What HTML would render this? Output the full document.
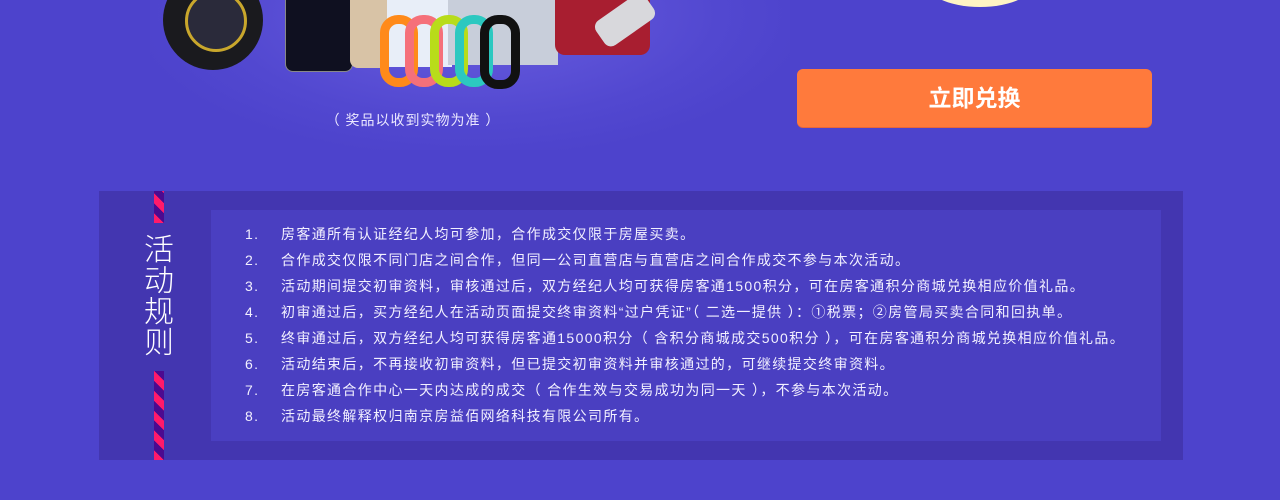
<!DOCTYPE html>
<html><head><meta charset="utf-8"><style>
body{margin:0;width:1280px;height:500px;background:#4d43cc;position:relative;overflow:hidden;font-family:"Liberation Sans","Noto Sans CJK SC",sans-serif}
.a{position:absolute}
.rules div{position:absolute;left:245px;color:#f2f0ff;font-size:14px;line-height:18px;white-space:nowrap;letter-spacing:1.35px}
.rules div span{position:absolute;left:36px;top:0}
</style></head><body>
<div class="a" style="left:150px;top:-20px;width:640px;height:170px;background:radial-gradient(ellipse at 50% 20%,#6a5ee0 0%,#5248d0 55%,#4d43cc 75%);"></div>
<div class="a" style="left:163px;top:-30px;width:100px;height:100px;border-radius:50%;background:#1a1a1e;"></div>
<div class="a" style="left:185px;top:-10px;width:56px;height:56px;border-radius:50%;border:3px solid #c9a72c;background:#2a2a3a;"></div>
<div class="a" style="left:285px;top:-5px;width:66px;height:75px;background:#0f1020;border-radius:0 0 8px 8px;border:1px solid #888;"></div>
<div class="a" style="left:350px;top:-5px;width:40px;height:73px;background:#d8c3a6;border-radius:0 0 8px 8px;"></div>
<div class="a" style="left:387px;top:-5px;width:65px;height:72px;background:#e8eef8;"></div>
<div class="a" style="left:448px;top:-5px;width:110px;height:70px;background:#c8ceda;"></div>
<div class="a" style="left:380px;top:15px;width:38px;height:72px;border:9px solid #ff8a1a;border-radius:18px;box-sizing:border-box"></div>
<div class="a" style="left:405px;top:15px;width:38px;height:72px;border:9px solid #f5707a;border-radius:18px;box-sizing:border-box"></div>
<div class="a" style="left:430px;top:15px;width:38px;height:72px;border:9px solid #b8dc1a;border-radius:18px;box-sizing:border-box"></div>
<div class="a" style="left:455px;top:15px;width:38px;height:72px;border:9px solid #2cc8c0;border-radius:18px;box-sizing:border-box"></div>
<div class="a" style="left:480px;top:15px;width:40px;height:74px;border:9px solid #111;border-radius:18px;box-sizing:border-box"></div>
<div class="a" style="left:555px;top:-5px;width:95px;height:60px;background:#a81e30;border-radius:0 0 10px 10px;"></div>
<div class="a" style="left:595px;top:5px;width:60px;height:30px;background:#d8d8dc;transform:rotate(-35deg);border-radius:8px"></div>
<div class="a" style="left:313px;top:110px;width:200px;text-align:center;color:#ebe8ff;font-size:14px;letter-spacing:1px">（ 奖品以收到实物为准 ）</div>
<div class="a" style="left:922px;top:-50px;width:116px;height:57px;border-radius:50%;background:#fff4c4;"></div>
<div class="a" style="left:797px;top:69px;width:355px;height:58px;background:#ff7a3c;border-radius:6px;color:#fff;font-size:23px;font-weight:bold;text-align:center;line-height:58px;box-shadow:0 1px 0 #e8663a">立即兑换</div>
<div class="a" style="left:99px;top:191px;width:1084px;height:269px;background:#4336b0;"></div>
<div class="a" style="left:154px;top:191px;width:10px;height:32px;background:repeating-linear-gradient(45deg,#ff1a6a 0 7px,#4b0a90 7px 14px);"></div>
<div class="a" style="left:154px;top:371px;width:10px;height:89px;background:repeating-linear-gradient(45deg,#ff1a6a 0 7px,#4b0a90 7px 14px);"></div>
<div class="a" style="left:140px;top:235px;width:38px;color:#fff;font-size:30px;line-height:31px;font-weight:300;text-align:center">活<br>动<br>规<br>则</div>
<div class="a" style="left:211px;top:210px;width:950px;height:231px;background:#4a3fc1;"></div>
<div class="rules">
<div style="top:225px">1.<span>房客通所有认证经纪人均可参加，合作成交仅限于房屋买卖。</span></div>
<div style="top:251px">2.<span>合作成交仅限不同门店之间合作，但同一公司直营店与直营店之间合作成交不参与本次活动。</span></div>
<div style="top:277px">3.<span>活动期间提交初审资料，审核通过后，双方经纪人均可获得房客通1500积分，可在房客通积分商城兑换相应价值礼品。</span></div>
<div style="top:303px">4.<span>初审通过后，买方经纪人在活动页面提交终审资料“过户凭证”（ 二选一提供 ）：①税票；②房管局买卖合同和回执单。</span></div>
<div style="top:329px">5.<span>终审通过后，双方经纪人均可获得房客通15000积分（ 含积分商城成交500积分 ），可在房客通积分商城兑换相应价值礼品。</span></div>
<div style="top:355px">6.<span>活动结束后，不再接收初审资料，但已提交初审资料并审核通过的，可继续提交终审资料。</span></div>
<div style="top:381px">7.<span>在房客通合作中心一天内达成的成交（ 合作生效与交易成功为同一天 ），不参与本次活动。</span></div>
<div style="top:407px">8.<span>活动最终解释权归南京房益佰网络科技有限公司所有。</span></div>
</div>
</body></html>
